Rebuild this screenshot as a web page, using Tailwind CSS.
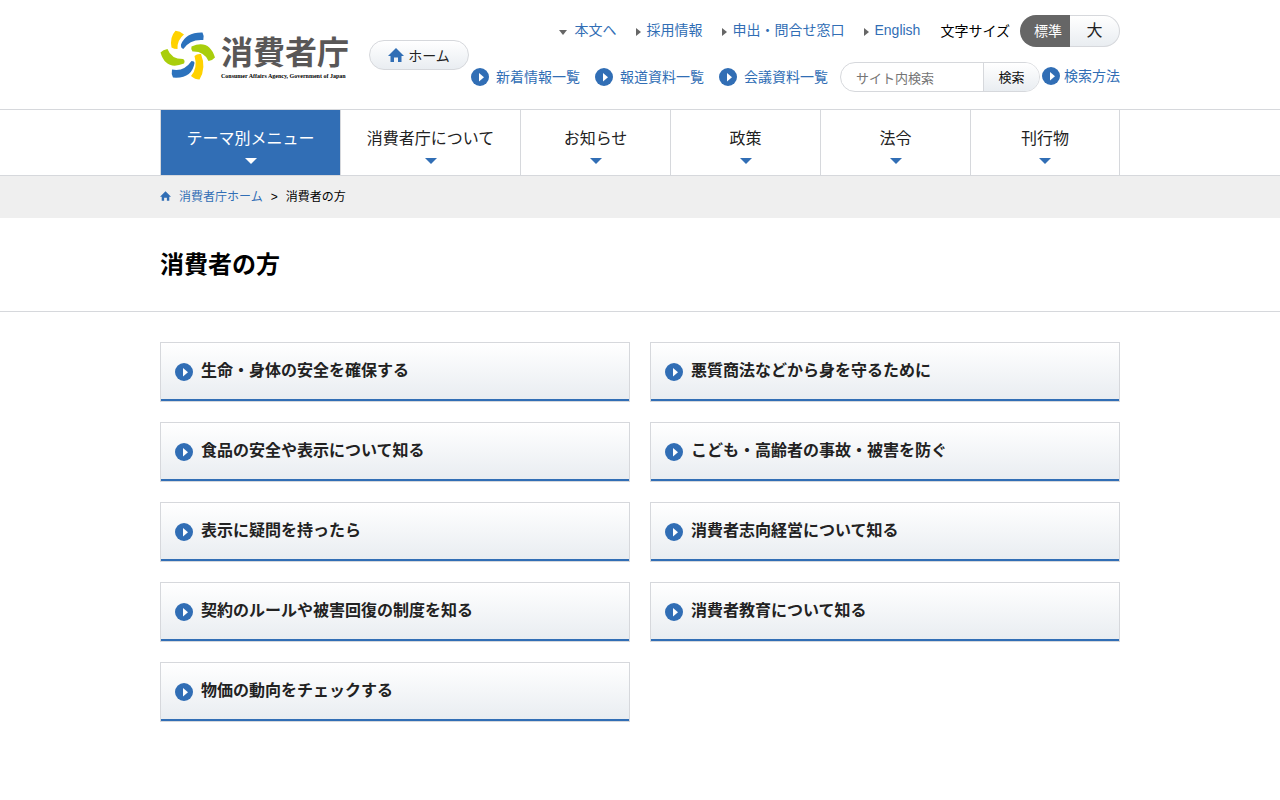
<!DOCTYPE html>
<html lang="ja">
  <head>
    <meta charset="UTF-8" />
    <meta name="viewport" content="width=device-width, initial-scale=1.0" />
    <title>消費者の方 | 消費者庁</title>
    <script src="https://cdn.jsdelivr.net/npm/@tailwindcss/browser@4"></script>
  </head>
  <body
    class="bg-white text-black text-sm font-['Liberation_Sans','Noto_Sans_CJK_JP',sans-serif]"
  >
    <!-- Shared icons -->
    <svg class="hidden" aria-hidden="true">
      <symbol id="icon-circle" viewBox="0 0 18 18">
        <circle cx="9" cy="9" r="9" fill="#316eb5" />
        <path d="M8 5l5 4.200-5 4.200z" fill="#fff" />
      </symbol>
      <symbol id="icon-home" viewBox="0 0 16 14">
        <path d="M8 0l8 8h-2.500v6H10V9.500H6V14H2.500V8H0z" fill="#316eb5" />
      </symbol>
      <symbol id="icon-right" viewBox="0 0 5 8">
        <path d="M0 0l5 4-5 4z" fill="#666" />
      </symbol>
      <symbol id="icon-down" viewBox="0 0 12 6">
        <path d="M0 0h12L6 6z" fill="currentColor" />
      </symbol>
    </svg>

    <header class="border-b border-[#d6d8dc]">
      <div class="max-w-[960px] mx-auto h-[109px] flex">
        <!-- Logo -->
        <a href="#" class="flex gap-[6px] mt-[30px] h-[50px] shrink-0">
          <svg class="w-[55px] h-[50px]" viewBox="0 0 55 50" aria-hidden="true">
            <path d="M15.500 0.700Q20 1 24 4.500Q17 10 17.500 19Q14 19 11.500 17.500Q9.500 7 15.500 0.700z" fill="#ffd200" />
            <path d="M21 14.500Q26 2 42.500 2.500Q44.500 6 43.300 10Q30 9 23.300 19Q20.500 18 21 14.500z" fill="#2b72bd" />
            <path d="M31.500 16.500Q49 9 55 27.500Q52.500 30.500 48.500 31Q44 21 32.500 21.500Q30.500 19.500 31.500 16.500z" fill="#a9ce0c" />
            <path d="M39.500 49.500Q35 49.500 31 46Q38 38 34.500 26Q37 23.500 41 24Q46.500 38 39.500 49.500z" fill="#ffd200" />
            <path d="M34.500 33Q32 49 13 47.500Q11 44 12 39.500Q24 42 31.500 31Q34.500 31 34.500 33z" fill="#2b72bd" />
            <path d="M24 33.500Q6 41 0.500 22.500Q3 19.500 7.500 19Q11 29 23 29Q25.500 30.500 24 33.500z" fill="#a9ce0c" />
          </svg>
          <span class="flex flex-col items-start pt-[7px]">
            <span class="text-[32px] leading-[33px] font-bold text-[#595757]">消費者庁</span>
            <span
              class="text-[6px] leading-[12px] font-bold whitespace-nowrap font-['Liberation_Serif',serif]"
              >Consumer Affairs Agency, Government of Japan</span
            >
          </span>
        </a>

        <a
          href="#"
          class="flex items-center justify-center gap-1 w-[100px] h-[30px] mt-10 ml-5 shrink-0 rounded-full border border-[#d6d8dc] bg-linear-to-b from-white to-[#e9edf1] text-[#222]"
        >
          <svg class="w-4 h-[14px]"><use href="#icon-home" /></svg>
          <span class="pt-[2px]">ホーム</span>
        </a>

        <div class="ml-auto pt-[15px] flex flex-col items-end gap-[15px] text-[#316eb5] whitespace-nowrap">
          <!-- Utility links -->
          <div class="flex gap-5 h-8">
            <a href="#" class="flex items-center gap-[7px] h-[30px]">
              <svg class="w-2 h-[5px] mt-1 text-[#666]" viewBox="0 0 8 5"><path d="M0 0h8L4 5z" fill="currentColor" /></svg>本文へ
            </a>
            <a href="#" class="flex items-center gap-[5px] h-[30px]">
              <svg class="w-[5px] h-2 mt-1"><use href="#icon-right" /></svg>採用情報
            </a>
            <a href="#" class="flex items-center gap-[5px] h-[30px]">
              <svg class="w-[5px] h-2 mt-1"><use href="#icon-right" /></svg>申出・問合せ窓口
            </a>
            <a href="#" class="flex items-center gap-[5px] h-[30px]">
              <svg class="w-[5px] h-2 mt-1"><use href="#icon-right" /></svg>English
            </a>
            <div class="flex items-center gap-[10px] text-black">
              <span>文字サイズ</span>
              <div class="flex w-[100px] h-8">
                <button type="button" class="w-[50px] pl-[6px] rounded-l-full bg-[#666] text-white">標準</button>
                <button
                  type="button"
                  class="w-[50px] rounded-r-full border border-l-0 border-[#d6d8dc] bg-linear-to-b from-white to-[#e9edf1] text-base text-[#222]"
                >
                  大
                </button>
              </div>
            </div>
          </div>

          <!-- Lists and search -->
          <div class="flex items-center h-[30px]">
            <a href="#" class="flex items-center gap-[7px] mr-[15px]">
              <svg class="size-[18px]"><use href="#icon-circle" /></svg>新着情報一覧
            </a>
            <a href="#" class="flex items-center gap-[7px] mr-[15px]">
              <svg class="size-[18px]"><use href="#icon-circle" /></svg>報道資料一覧
            </a>
            <a href="#" class="flex items-center gap-[7px] mr-3">
              <svg class="size-[18px]"><use href="#icon-circle" /></svg>会議資料一覧
            </a>
            <form
              class="flex w-[200px] h-[30px] rounded-full overflow-hidden border border-[#d6d8dc] text-[13px]"
            >
              <input
                type="text"
                aria-label="サイト内検索"
                placeholder="サイト内検索"
                class="w-[142px] pl-[15px] pt-[2px] text-sm placeholder:text-[13px] placeholder:text-[#757575] text-black"
              />
              <button
                type="button"
                class="flex-1 border-l border-[#d6d8dc] bg-linear-to-b from-white to-[#e9edf1] pt-[2px] text-[#111]"
              >
                検索
              </button>
            </form>
            <a href="#" class="flex items-center gap-1 ml-[2px] pb-[2px]">
              <svg class="size-[18px]"><use href="#icon-circle" /></svg>検索方法
            </a>
          </div>
        </div>
      </div>
    </header>

    <!-- Global navigation -->
    <nav class="border-b border-[#d6d8dc]">
      <ul
        class="max-w-[960px] mx-auto grid grid-cols-[180fr_180fr_150fr_150fr_150fr_150fr] h-[65px] text-base text-[#222]"
      >
        <li class="border-l border-[#d6d8dc]">
          <a href="#" class="flex flex-col items-center h-full pt-[17px] gap-[7px] bg-[#316eb5] text-white">
            テーマ別メニュー<svg class="w-3 h-[6px]"><use href="#icon-down" /></svg>
          </a>
        </li>
        <li class="border-l border-[#d6d8dc]">
          <a href="#" class="flex flex-col items-center h-full pt-[17px] gap-[7px]">
            消費者庁について<svg class="w-3 h-[6px] text-[#316eb5]"><use href="#icon-down" /></svg>
          </a>
        </li>
        <li class="border-l border-[#d6d8dc]">
          <a href="#" class="flex flex-col items-center h-full pt-[17px] gap-[7px]">
            お知らせ<svg class="w-3 h-[6px] text-[#316eb5]"><use href="#icon-down" /></svg>
          </a>
        </li>
        <li class="border-l border-[#d6d8dc]">
          <a href="#" class="flex flex-col items-center h-full pt-[17px] gap-[7px]">
            政策<svg class="w-3 h-[6px] text-[#316eb5]"><use href="#icon-down" /></svg>
          </a>
        </li>
        <li class="border-l border-[#d6d8dc]">
          <a href="#" class="flex flex-col items-center h-full pt-[17px] gap-[7px]">
            法令<svg class="w-3 h-[6px] text-[#316eb5]"><use href="#icon-down" /></svg>
          </a>
        </li>
        <li class="border-x border-[#d6d8dc]">
          <a href="#" class="flex flex-col items-center h-full pt-[17px] gap-[7px]">
            刊行物<svg class="w-3 h-[6px] text-[#316eb5]"><use href="#icon-down" /></svg>
          </a>
        </li>
      </ul>
    </nav>

    <!-- Breadcrumb -->
    <div class="bg-[#efefef]">
      <div class="max-w-[960px] mx-auto h-[42px] flex items-center gap-2 text-xs">
        <a href="#" class="flex items-center gap-2 text-[#316eb5]">
          <svg class="w-[11px] h-[10px] mb-[3px]"><use href="#icon-home" /></svg>消費者庁ホーム
        </a>
        <span>&gt;</span>
        <span>消費者の方</span>
      </div>
    </div>

    <div class="border-b border-[#d6d8dc]">
      <h1 class="max-w-[960px] mx-auto py-[30px] text-2xl leading-[33px] font-bold">消費者の方</h1>
    </div>

    <main class="max-w-[960px] mx-auto py-[30px]">
      <ul class="grid grid-cols-2 gap-5 text-base font-bold text-[#222]">
        <li class="h-[60px] border border-[#d6d8dc]">
          <a href="#" class="flex items-center gap-2 h-full px-[14px] border-b-2 border-[#316eb5] bg-linear-to-b from-white to-[#e9edf1]">
            <svg class="size-[18px] mt-[2px]"><use href="#icon-circle" /></svg>生命・身体の安全を確保する
          </a>
        </li>
        <li class="h-[60px] border border-[#d6d8dc]">
          <a href="#" class="flex items-center gap-2 h-full px-[14px] border-b-2 border-[#316eb5] bg-linear-to-b from-white to-[#e9edf1]">
            <svg class="size-[18px] mt-[2px]"><use href="#icon-circle" /></svg>悪質商法などから身を守るために
          </a>
        </li>
        <li class="h-[60px] border border-[#d6d8dc]">
          <a href="#" class="flex items-center gap-2 h-full px-[14px] border-b-2 border-[#316eb5] bg-linear-to-b from-white to-[#e9edf1]">
            <svg class="size-[18px] mt-[2px]"><use href="#icon-circle" /></svg>食品の安全や表示について知る
          </a>
        </li>
        <li class="h-[60px] border border-[#d6d8dc]">
          <a href="#" class="flex items-center gap-2 h-full px-[14px] border-b-2 border-[#316eb5] bg-linear-to-b from-white to-[#e9edf1]">
            <svg class="size-[18px] mt-[2px]"><use href="#icon-circle" /></svg>こども・高齢者の事故・被害を防ぐ
          </a>
        </li>
        <li class="h-[60px] border border-[#d6d8dc]">
          <a href="#" class="flex items-center gap-2 h-full px-[14px] border-b-2 border-[#316eb5] bg-linear-to-b from-white to-[#e9edf1]">
            <svg class="size-[18px] mt-[2px]"><use href="#icon-circle" /></svg>表示に疑問を持ったら
          </a>
        </li>
        <li class="h-[60px] border border-[#d6d8dc]">
          <a href="#" class="flex items-center gap-2 h-full px-[14px] border-b-2 border-[#316eb5] bg-linear-to-b from-white to-[#e9edf1]">
            <svg class="size-[18px] mt-[2px]"><use href="#icon-circle" /></svg>消費者志向経営について知る
          </a>
        </li>
        <li class="h-[60px] border border-[#d6d8dc]">
          <a href="#" class="flex items-center gap-2 h-full px-[14px] border-b-2 border-[#316eb5] bg-linear-to-b from-white to-[#e9edf1]">
            <svg class="size-[18px] mt-[2px]"><use href="#icon-circle" /></svg>契約のルールや被害回復の制度を知る
          </a>
        </li>
        <li class="h-[60px] border border-[#d6d8dc]">
          <a href="#" class="flex items-center gap-2 h-full px-[14px] border-b-2 border-[#316eb5] bg-linear-to-b from-white to-[#e9edf1]">
            <svg class="size-[18px] mt-[2px]"><use href="#icon-circle" /></svg>消費者教育について知る
          </a>
        </li>
        <li class="h-[60px] border border-[#d6d8dc]">
          <a href="#" class="flex items-center gap-2 h-full px-[14px] border-b-2 border-[#316eb5] bg-linear-to-b from-white to-[#e9edf1]">
            <svg class="size-[18px] mt-[2px]"><use href="#icon-circle" /></svg>物価の動向をチェックする
          </a>
        </li>
      </ul>
    </main>
  </body>
</html>
